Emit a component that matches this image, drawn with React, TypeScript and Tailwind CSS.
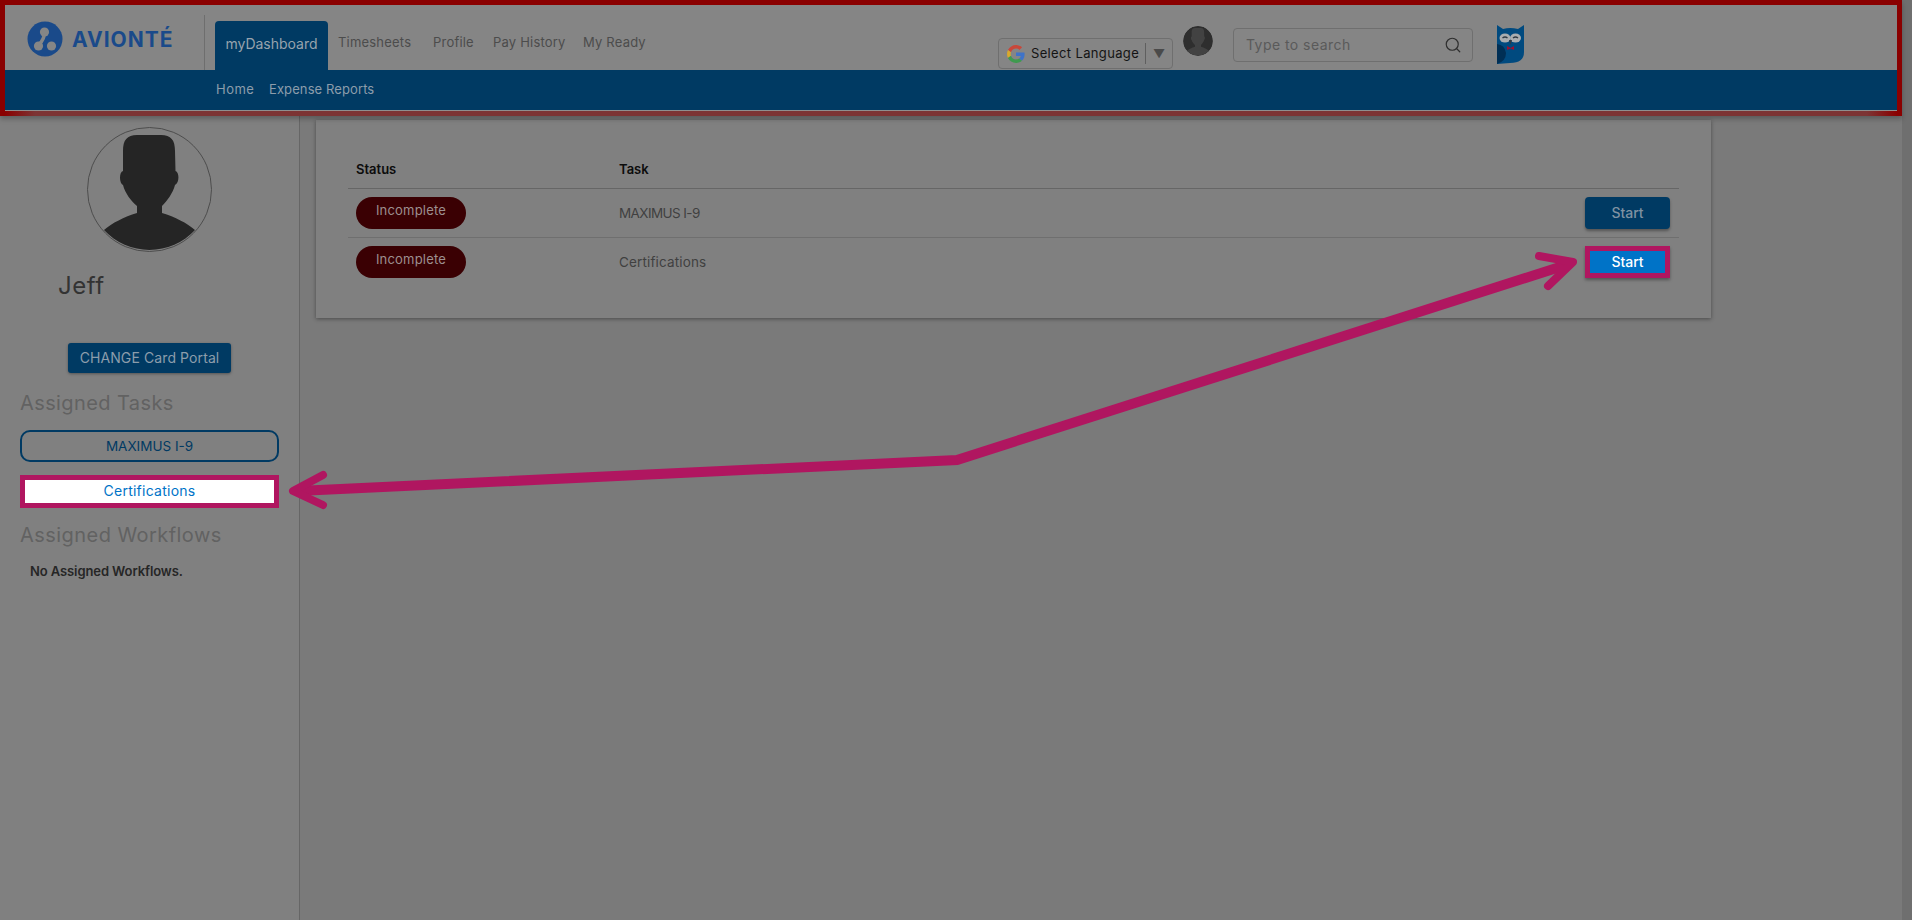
import React from 'react';
import { Search } from 'lucide-react';

const navItems = ['Timesheets', 'Profile', 'Pay History', 'My Ready'];

const tasks = [
  { name: 'MAXIMUS I-9', highlighted: false },
  { name: 'Certifications', highlighted: true },
];

const AvionteLogo = () => (
  <svg width="36" height="36" viewBox="0 0 36 36">
    <circle cx="18" cy="18" r="17.5" fill="#1a4a8a" />
    <path d="M17.500 11 Q18 17 11.500 24.500" stroke="#868686" strokeWidth="3.6" fill="none" />
    <circle cx="17.500" cy="11" r="4.6" fill="#868686" />
    <circle cx="11.500" cy="25" r="4.6" fill="#868686" />
    <circle cx="24.500" cy="25" r="4.6" fill="#868686" />
  </svg>
);

const GoogleG = () => (
  <svg width="18" height="18" viewBox="0 0 48 48">
    <path fill="#c9473a" d="M24 9.500c3.500 0 6.700 1.200 9.200 3.600l6.900-6.900C35.900 2.400 30.500 0 24 0 14.600 0 6.500 5.400 2.600 13.200l8 6.200C12.400 13.600 17.700 9.500 24 9.500z" />
    <path fill="#3f73c9" d="M46.900 24.500c0-1.600-.1-3.100-.4-4.500H24v9h12.900c-.6 3-2.200 5.500-4.800 7.200l7.700 6c4.500-4.200 7.100-10.300 7.100-17.700z" />
    <path fill="#d8a92c" d="M10.500 28.600c-.5-1.400-.8-3-.8-4.600s.3-3.200.8-4.600l-8-6.200C.9 16.500 0 20.100 0 24s.9 7.500 2.600 10.800l7.900-6.200z" />
    <path fill="#3f9a4f" d="M24 48c6.500 0 11.900-2.100 15.900-5.800l-7.700-6c-2.100 1.400-4.900 2.300-8.200 2.300-6.300 0-11.600-4.100-13.500-9.900l-8 6.200C6.500 42.600 14.600 48 24 48z" />
  </svg>
);

const OwlLogo = () => (
  <svg width="27" height="39" viewBox="0 0 27 39">
    <path d="M0 0 L6 4 Q13 2 21 4 L27 0 V27 Q27 38 13 38 L0 39 Z" fill="#004a7f" />
    <path d="M0 19 Q8 20 9 28 Q9 36 0 39 Z" fill="#002f55" />
    <ellipse cx="8" cy="13" rx="5.500" ry="4.500" fill="#a9adb0" />
    <ellipse cx="18.500" cy="13" rx="5.500" ry="4.500" fill="#a9adb0" />
    <path d="M5.500 13 Q8 11 10.500 13 M16 13 Q18.500 11 21 13" stroke="#2f3a44" strokeWidth="1.400" fill="none" />
    <path d="M12 15 H15 L13.500 20 Z" fill="#2f3a44" />
    <path d="M10 21 L13.500 23 L17 21 V25 L13.500 23.500 L10 25 Z" fill="#9b1030" />
  </svg>
);

const Silhouette = ({ fill, bg, ring }: { fill: string; bg: string; ring?: string }) => (
  <svg viewBox="0 0 125 125" className="h-full w-full">
    <circle cx="62.500" cy="62.500" r="62" fill={bg} stroke={ring ?? 'none'} strokeWidth="1" />
    <path
      fill={fill}
      d="M50 8 H74 C84 8 88 13 88 24 L88.500 44 C92.500 45 92.500 56 88 58 C86 66 80 74 75 79 V86 C88 90 100 96 108 103 A62 62 0 0 1 17 103 C25 96 37 90 50 86 V79 C44 74 38 66 36 58 C32 56 32 45 36 44 L36 24 C36 13 40 8 50 8 Z"
    />
  </svg>
);

export default function App() {
  return (
    <div className="relative flex h-[920px] w-full overflow-hidden bg-[#7a7a7a] text-[#333] [font-family:Inter,sans-serif]">
      <div className="flex min-w-0 flex-1 flex-col">
        {/* Header with the red callout frame */}
        <header className="relative z-10 box-border h-[116px] w-[1902px] shrink-0 border-x-[5px] border-t-[5px] border-x-[#8a0000] border-t-[#8a0000] bg-[#858585] shadow-[0_3px_5px_rgba(0,0,0,0.25)]">
          <div className="relative flex h-[65px] items-end">
            <div className="flex h-[65px] w-[199px] items-start pl-[22px] pt-[16px]">
              <AvionteLogo />
              <span className="ml-[9px] mt-[7px] text-[21px] leading-[24px] font-bold tracking-[1px] text-[#1a4a8a]">
                AVIONTÉ
              </span>
            </div>
            <div className="mt-[10px] h-[55px] w-px self-end bg-[#6e6e6e]" />
            {/* Top navigation */}
            <div className="ml-[10px] flex h-[49px] w-[113px] items-center justify-center rounded-t-[4px] bg-[#003a63] text-[14px] text-[#97a3ad]">
              <span className="-mt-[5px]">myDashboard</span>
            </div>
            <nav className="flex h-[49px] items-center text-[13px] tracking-[0.2px] text-[#4c4c4c]">
              <span className="-mt-[5px] ml-[10px] w-[95px]">{navItems[0]}</span>
              <span className="-mt-[5px] w-[60px]">{navItems[1]}</span>
              <span className="-mt-[5px] w-[90px]">{navItems[2]}</span>
              <span className="-mt-[5px]">{navItems[3]}</span>
            </nav>
            {/* Language picker */}
            <div className="absolute left-[993px] top-[33px] flex h-[31px] w-[175px] items-center rounded-[4px] border border-[#6f6f6f] pl-[8px]">
              <GoogleG />
              <span className="ml-[6px] text-[13px] tracking-[0.35px] whitespace-nowrap text-[#141414]">
                Select Language
              </span>
              <span className="ml-[6px] h-[21px] w-px bg-[#5f5f5f]" />
              <span className="ml-[7px] text-[12px] text-[#4a4a4a]">▼</span>
            </div>
            <div className="absolute left-[1178px] top-[21px] h-[30px] w-[30px]">
              <div className="h-full w-full overflow-hidden rounded-full">
                <Silhouette fill="#424242" bg="#2e2e2e" />
              </div>
            </div>
            {/* Search box */}
            <div className="absolute left-[1228px] top-[23px] flex h-[34px] w-[240px] items-center justify-between rounded-[4px] border border-[#6f6f6f] pl-[12px] pr-[10px]">
              <span className="-mt-[2px] text-[14px] tracking-[0.45px] text-[#5a5a5a]">Type to search</span>
              <Search size={18} strokeWidth={1.600} color="#2e2e2e" />
            </div>
            <div className="absolute left-[1492px] top-[20px]">
              <OwlLogo />
            </div>
          </div>
          {/* Sub navigation */}
          <div className="flex h-[40px] items-center bg-[#003a63] pl-[211px] text-[13px] tracking-[0.1px] text-[#8c9dab]">
            <span className="w-[53px] tracking-[0.5px]">Home</span>
            <span>Expense Reports</span>
          </div>
          <div className="h-px bg-[#8f8f8f]" />
          <div className="h-[5px] bg-[linear-gradient(to_right,#8a0000,#7c3434_30px,#7c3434_calc(100%-30px),#8a0000)]" />
        </header>

        <div className="flex min-h-0 flex-1">
          {/* Sidebar */}
          <aside className="flex w-[300px] shrink-0 flex-col border-r border-[#666] bg-[#808080] pl-[20px]">
            <div className="ml-[67px] mt-[11px] h-[125px] w-[125px]">
              <Silhouette fill="#252525" bg="#808080" ring="#4d4d4d" />
            </div>
            <div className="ml-[38px] mt-[18px] text-[24px] leading-[32px] tracking-[0.5px] text-[#333]">Jeff</div>
            <button className="ml-[48px] mt-[41px] h-[30px] w-[163px] rounded-[3px] bg-[#003a63] pb-[2px] text-[14px] tracking-[0.1px] text-[#8c9dab] shadow-[0_1px_3px_rgba(0,0,0,0.35)]">
              CHANGE Card Portal
            </button>
            <h2 className="mt-[17px] text-[20px] leading-[26px] tracking-[0.4px] text-[#626262]">Assigned Tasks</h2>
            <button className="mt-[14px] h-[32px] w-[259px] rounded-[10px] border-2 border-[#003a63] text-[13.500px] text-[#003a63]">
              MAXIMUS I-9
            </button>
            <button className="mt-[13px] h-[33px] w-[259px] border-[5px] border-[#b01660] bg-white pb-[2px] text-[14px] tracking-[0.25px] text-[#0073c7]">
              Certifications
            </button>
            <h2 className="mt-[14px] text-[20px] leading-[26px] tracking-[0.45px] text-[#626262]">Assigned Workflows</h2>
            <p className="ml-[10px] mt-[13px] text-[13px] leading-[20px] font-semibold tracking-[-0.1px] text-[#262626]">
              No Assigned Workflows.
            </p>
          </aside>

          {/* Task card */}
          <main className="min-w-0 flex-1 pl-[16px] pt-[4px]">
            <section className="box-border h-[198px] w-[1395px] bg-[#808080] px-[32px] shadow-[0_1px_4px_rgba(0,0,0,0.4)]">
              <div className="flex h-[69px] items-end border-b border-[#666] pb-[9px] text-[13px] font-semibold text-[#0c0c0c]">
                <span className="ml-[8px] w-[263px]">Status</span>
                <span>Task</span>
              </div>
              {tasks.map((task) => (
                <div key={task.name} className={task.highlighted ? 'flex h-[48px] items-center' : 'flex h-[49px] items-center border-b border-[#6f6f6f]'}>
                  <span className="ml-[8px] flex h-[32px] w-[110px] items-start justify-center rounded-full bg-[#3a0003] pt-[4px] text-[13px] tracking-[0.2px] text-[#9d8f8f]">
                    Incomplete
                  </span>
                  <span className={task.highlighted ? 'ml-[153px] flex-1 text-[13.500px] tracking-[0.15px] text-[#404040]' : 'ml-[153px] flex-1 text-[13.500px] tracking-[-0.6px] text-[#404040]'}>
                    {task.name}
                  </span>
                  {task.highlighted ? (
                    <button className="mr-[9px] h-[32px] w-[85px] border-[5px] border-[#b01660] bg-[#0073c7] pb-[1px] text-[14px] font-medium text-white shadow-[0_2px_3px_rgba(0,0,0,0.35)]">
                      Start
                    </button>
                  ) : (
                    <button className="mr-[9px] h-[32px] w-[85px] rounded-[4px] bg-[#003a63] pb-[2px] text-[14px] font-medium text-[#7f92a2] shadow-[0_2px_3px_rgba(0,0,0,0.35)]">
                      Start
                    </button>
                  )}
                </div>
              ))}
            </section>
          </main>
        </div>
      </div>

      {/* Scrollbar track */}
      <div className="w-[10px] shrink-0 bg-[#6f6f6f]" />

      {/* Callout arrow */}
      <svg className="pointer-events-none absolute left-0 top-0 z-20" width="1912" height="920" fill="none">
        <path d="M1566 265 L957 460 L298 491" stroke="#b01660" strokeWidth="10" strokeLinejoin="miter" />
        <path d="M1539 256 L1573 262 L1548 286" stroke="#b01660" strokeWidth="8" strokeLinecap="round" strokeLinejoin="round" />
        <path d="M323 475 L293 491 L323 505" stroke="#b01660" strokeWidth="8" strokeLinecap="round" strokeLinejoin="round" />
      </svg>
    </div>
  );
}
